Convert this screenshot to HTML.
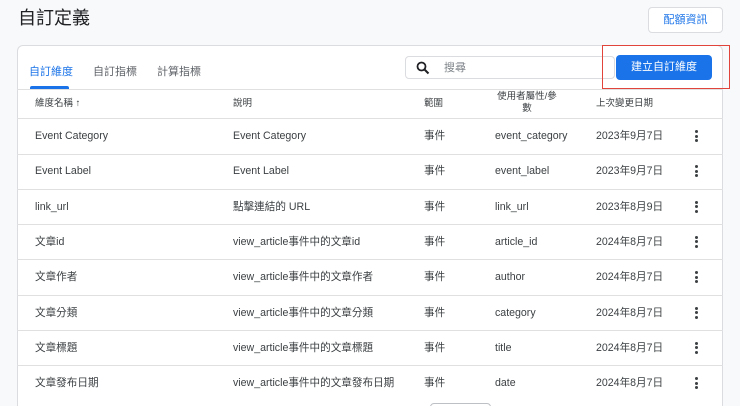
<!DOCTYPE html>
<html><head><meta charset="utf-8"><style>
*{box-sizing:border-box;margin:0;padding:0}
html,body{width:740px;height:406px;overflow:hidden}
body{background:#f8f9fa;font-family:"Liberation Sans","Noto Sans CJK TC",sans-serif;color:#3c4043;position:relative}
.abs{position:absolute}
h1{position:absolute;left:18px;top:6px;font-size:18px;line-height:24px;font-weight:400;color:#202124}
.quota{left:648px;top:7px;width:75px;height:26px;border:1px solid #dadce0;border-radius:4px;background:#fff;color:#1a73e8;font-size:11px;text-align:center;line-height:24px}
.card{left:17px;top:45px;width:706px;height:361px;background:#fff;border:1px solid #dadce0;border-bottom:none;border-radius:6px 6px 0 0}
.tab{top:64px;font-size:11px;line-height:16px;color:#5f6368}
.search{left:405px;top:56px;width:210px;height:23px;border:1px solid #dadce0;border-radius:4px;background:#fff}
.btn{left:616px;top:55px;width:96px;height:25px;background:#1a73e8;border-radius:4px;color:#fff;font-size:11px;text-align:center;line-height:25px}
.red{left:602px;top:45px;width:128px;height:44px;border:1.5px solid #e0443a}
.line{left:17px;width:706px;height:1px;background:#e0e0e0}
.th{font-size:9.5px;line-height:14px;color:#3c4043}
.td{font-size:10.6px;line-height:14px;color:#3c4043}
.dots{width:3px}
.dots i{display:block;width:3px;height:3px;border-radius:50%;background:#3c4043;margin-bottom:1.5px}
</style></head><body>
<h1>自訂定義</h1>
<div class="abs quota">配額資訊</div>
<div class="abs card"></div>
<div class="abs tab" style="left:29px;color:#1a73e8">自訂維度</div>
<div class="abs" style="left:30px;top:86px;width:39px;height:3px;background:#1a73e8;border-radius:2px 2px 0 0"></div>
<div class="abs tab" style="left:93px">自訂指標</div>
<div class="abs tab" style="left:157px">計算指標</div>
<div class="abs search"><svg class="abs" style="left:10px;top:4px" width="14" height="14" viewBox="0 0 14 14"><circle cx="5.5" cy="5.5" r="4" fill="none" stroke="#202124" stroke-width="1.8"/><path d="M8.5 8.5L12.5 12.5" stroke="#202124" stroke-width="2"/></svg><span class="abs" style="left:38px;top:4px;font-size:11px;line-height:15px;color:#80868b">搜尋</span></div>
<div class="abs btn">建立自訂維度</div>
<div class="abs red"></div>
<div class="abs line" style="top:89px"></div>
<div class="abs th" style="left:35px;top:97px">維度名稱 ↑</div>
<div class="abs th" style="left:233px;top:97px">說明</div>
<div class="abs th" style="left:424px;top:97px">範圍</div>
<div class="abs th" style="left:492px;top:91px;width:70px;text-align:center;line-height:12px">使用者屬性/參<br>數</div>
<div class="abs th" style="left:596px;top:97px">上次變更日期</div>
<div class="abs line" style="top:118px"></div>
<div id="rows"></div>
<script>
var d=[["Event Category","Event Category","event_category","2023年9月7日"],["Event Label","Event Label","event_label","2023年9月7日"],["link_url","點擊連結的 URL","link_url","2023年8月9日"],["文章id","view_article事件中的文章id","article_id","2024年8月7日"],["文章作者","view_article事件中的文章作者","author","2024年8月7日"],["文章分類","view_article事件中的文章分類","category","2024年8月7日"],["文章標題","view_article事件中的文章標題","title","2024年8月7日"],["文章發布日期","view_article事件中的文章發布日期","date","2024年8月7日"]];
var h="";d.forEach(function(r,i){var c=136+i*35.3;var t=c-7;
h+='<div class="abs td" style="left:35px;top:'+t+'px">'+r[0]+'</div><div class="abs td" style="left:233px;top:'+t+'px">'+r[1]+'</div><div class="abs td" style="left:424px;top:'+t+'px">事件</div><div class="abs td" style="left:495px;top:'+t+'px">'+r[2]+'</div><div class="abs td" style="left:596px;top:'+t+'px">'+r[3]+'</div><div class="abs dots" style="left:695px;top:'+(c-6)+'px"><i></i><i></i><i></i></div>';
if(i<7)h+='<div class="abs line" style="top:'+(c+17.5)+'px"></div>';});
h+='<div class="abs" style="left:430px;top:403px;width:61px;height:10px;border:1px solid #bdc1c6;border-radius:4px"></div>';
document.getElementById("rows").innerHTML=h;
</script>
</body></html>
